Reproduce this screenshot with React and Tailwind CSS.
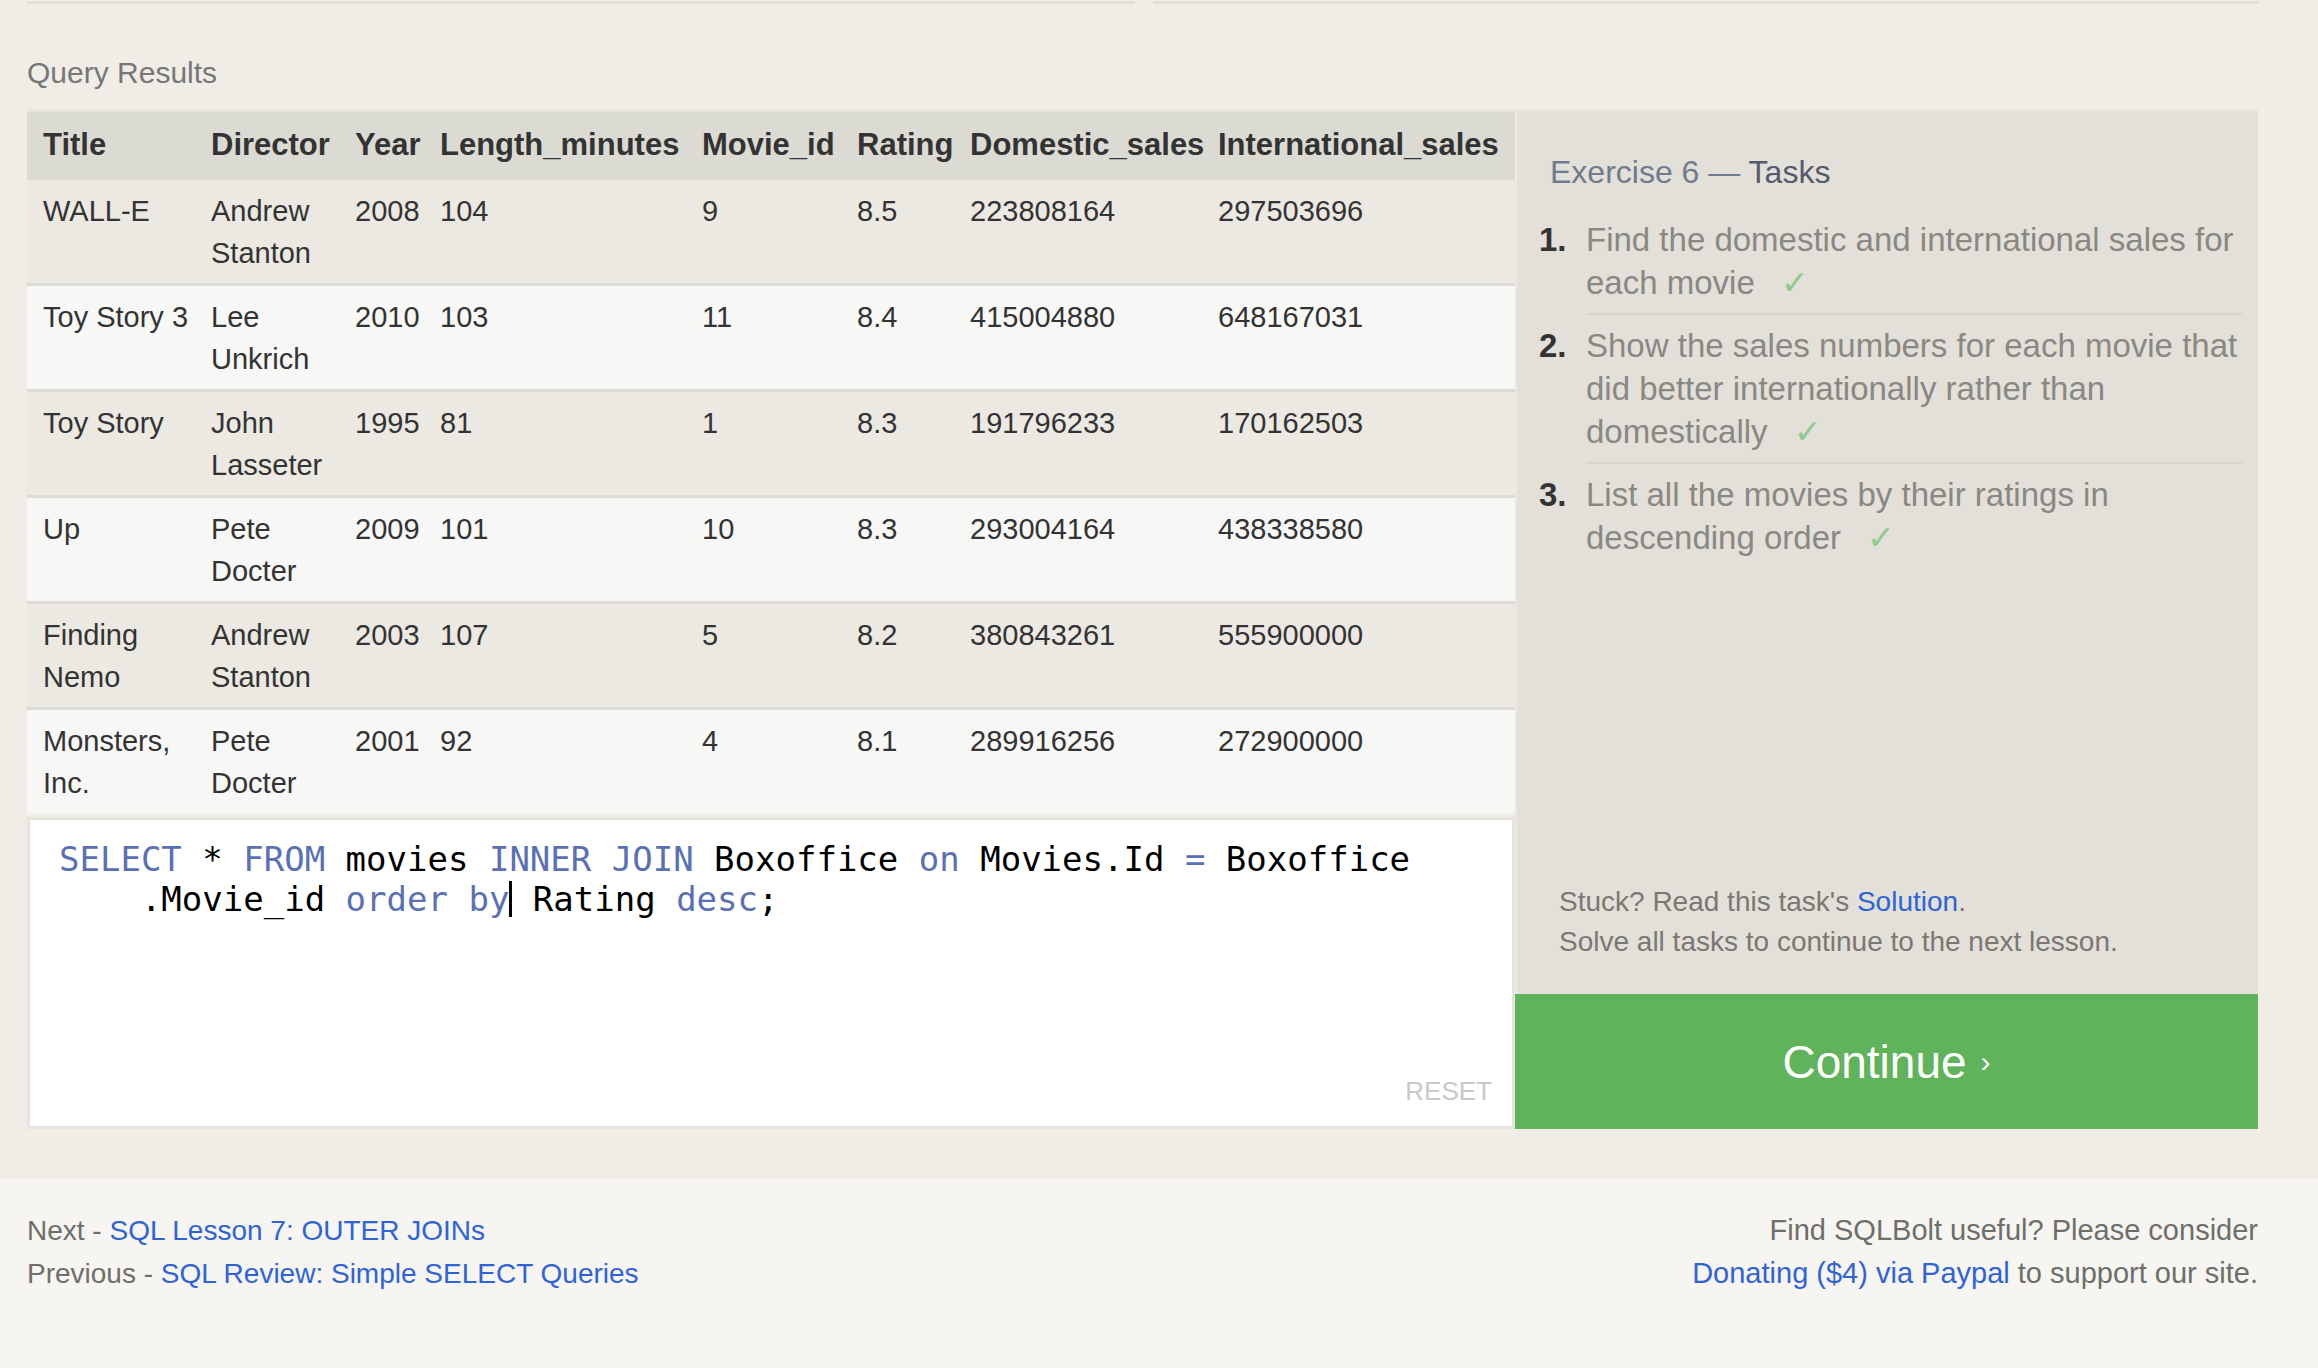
import React from 'react';

const columns = [
  { key: 'title', label: 'Title', width: 'w-[168px]' },
  { key: 'director', label: 'Director', width: 'w-[144px]' },
  { key: 'year', label: 'Year', width: 'w-[85px]' },
  { key: 'length', label: 'Length_minutes', width: 'w-[262px]' },
  { key: 'movieId', label: 'Movie_id', width: 'w-[155px]' },
  { key: 'rating', label: 'Rating', width: 'w-[113px]' },
  { key: 'domestic', label: 'Domestic_sales', width: 'w-[248px]' },
  { key: 'intl', label: 'International_sales', width: 'w-[313px]' },
];

const rows = [
  { title: 'WALL-E', director: 'Andrew Stanton', year: 2008, length: 104, movieId: 9, rating: '8.5', domestic: 223808164, intl: 297503696 },
  { title: 'Toy Story 3', director: 'Lee Unkrich', year: 2010, length: 103, movieId: 11, rating: '8.4', domestic: 415004880, intl: 648167031 },
  { title: 'Toy Story', director: 'John Lasseter', year: 1995, length: 81, movieId: 1, rating: '8.3', domestic: 191796233, intl: 170162503 },
  { title: 'Up', director: 'Pete Docter', year: 2009, length: 101, movieId: 10, rating: '8.3', domestic: 293004164, intl: 438338580 },
  { title: 'Finding Nemo', director: 'Andrew Stanton', year: 2003, length: 107, movieId: 5, rating: '8.2', domestic: 380843261, intl: 555900000 },
  { title: 'Monsters, Inc.', director: 'Pete Docter', year: 2001, length: 92, movieId: 4, rating: '8.1', domestic: 289916256, intl: 272900000 },
];

const tasks = [
  'Find the domestic and international sales for each movie',
  'Show the sales numbers for each movie that did better internationally rather than domestically',
  'List all the movies by their ratings in descending order',
];

const Kw = ({ children }) => <span className="text-[#5a70b4]">{children}</span>;

const ResultsTable = () => (
  <table className="w-full table-fixed border-collapse text-[29px] leading-[42px] text-[#333]">
    <colgroup>
      {columns.map((c) => (
        <col key={c.key} className={c.width} />
      ))}
    </colgroup>
    <thead>
      <tr className="bg-[#dcdbd3]">
        {columns.map((c) => (
          <th key={c.key} className="pl-4 pt-[12px] pb-[11px] text-left text-[31px] font-bold whitespace-nowrap">
            {c.label}
          </th>
        ))}
      </tr>
    </thead>
    <tbody>
      {rows.map((r, i) => (
        <tr key={r.title} className={`border-t-[3px] border-[#dddcd4] ${i % 2 === 0 ? 'bg-[#ebe9e2]' : 'bg-[#f7f7f5]'}`}>
          {columns.map((c) => (
            <td key={c.key} className="pl-4 pr-0 pt-[10px] pb-[9px] align-top">
              {r[c.key]}
            </td>
          ))}
        </tr>
      ))}
    </tbody>
  </table>
);

const Editor = () => (
  <div className="relative mt-[4px] h-[312px] border-[3px] border-[#e6e4dd] bg-white pl-[29px] pt-[19px]">
    <pre className="font-['DejaVu_Sans_Mono',monospace] text-[34px] leading-[40px] text-black">
      <Kw>SELECT</Kw> * <Kw>FROM</Kw> movies <Kw>INNER JOIN</Kw> Boxoffice <Kw>on</Kw> Movies.Id <Kw>=</Kw> Boxoffice
      {'\n'}
      {'    '}.Movie_id <Kw>order by</Kw>
      <span className="inline-block h-[36px] w-[3px] -mb-[6px] bg-black align-baseline" />
      {' '}Rating <Kw>desc</Kw>;
    </pre>
    <span className="absolute bottom-[20px] right-[20px] text-[26px] leading-[30px] text-[#c9c9c9]">RESET</span>
  </div>
);

const TaskPanel = () => (
  <div className="flex w-[743px] flex-col">
    <div className="flex flex-1 flex-col justify-between border-l-[2px] border-[#ebe9e2] bg-[#e2e0d8] pl-[22px] pr-[16px] pt-[40px] pb-[32px]">
      <div>
        <h2 className="ml-[11px] text-[32px] leading-[40px]">
          <span className="text-[#707b8d]">Exercise 6 — </span>
          <span className="text-[#535b6c]">Tasks</span>
        </h2>
        <ol className="mt-[26px]">
          {tasks.map((t, i) => (
            <li key={i} className="flex text-[33px] leading-[43px]">
              <span className={`w-[47px] shrink-0 font-bold text-[#333] ${i === 0 ? 'pt-0' : 'pt-[9px]'}`}>{i + 1}.</span>
              <span
                className={`flex-1 text-[#8a8883] ${i === 0 ? 'pt-0' : 'pt-[9px]'} ${
                  i < tasks.length - 1 ? 'border-b-[2px] border-[#d6d4cb] pb-[9px]' : ''
                }`}
              >
                {t}
                <span className="ml-[26px] text-[#8ccb88]">✓</span>
              </span>
            </li>
          ))}
        </ol>
      </div>
      <div className="ml-[20px] text-[28px] leading-[40px] text-[#7b7772]">
        <div>
          Stuck? Read this task's <a className="text-[#2f63d6]">Solution</a>.
        </div>
        <div>Solve all tasks to continue to the next lesson.</div>
      </div>
    </div>
    <button className="flex h-[135px] items-center justify-center gap-[14px] bg-[#5fb35a] text-white">
      <span className="text-[46px] leading-none">Continue</span>
      <span className="text-[30px] leading-none">›</span>
    </button>
  </div>
);

export default function App() {
  return (
    <div className="min-h-[1368px] bg-[#efede6] font-['Liberation_Sans',Arial,sans-serif]">
      <div className="pl-[27px] pr-[60px]">
        <div className="flex gap-[18px]">
          <div className="h-[4px] w-[1108px] border-b-[3px] border-[#e0ded6] bg-[#f1efe9]" />
          <div className="h-[4px] flex-1 border-b-[3px] border-[#e0ded6] bg-[#f1efe9]" />
        </div>
        <h3 className="mt-[48px] text-[30px] leading-[42px] text-[#777]">Query Results</h3>
        <div className="mt-[15px] flex border-t-[3px] border-[#e7e5de]">
          <div className="w-[1488px]">
            <ResultsTable />
            <Editor />
          </div>
          <TaskPanel />
        </div>
      </div>
      <footer className="mt-[50px] flex min-h-[190px] justify-between bg-[#f6f5f1] pl-[27px] pr-[60px] pt-[30px] leading-[43px] text-[#6e6e6a]">
        <div className="text-[28px]">
          <div>
            Next - <a className="text-[#2f63d6]">SQL Lesson 7: OUTER JOINs</a>
          </div>
          <div>
            Previous - <a className="text-[#2f63d6]">SQL Review: Simple SELECT Queries</a>
          </div>
        </div>
        <div className="text-right text-[29px]">
          <div>Find SQLBolt useful? Please consider</div>
          <div>
            <a className="text-[#2f63d6]">Donating ($4) via Paypal</a> to support our site.
          </div>
        </div>
      </footer>
    </div>
  );
}
